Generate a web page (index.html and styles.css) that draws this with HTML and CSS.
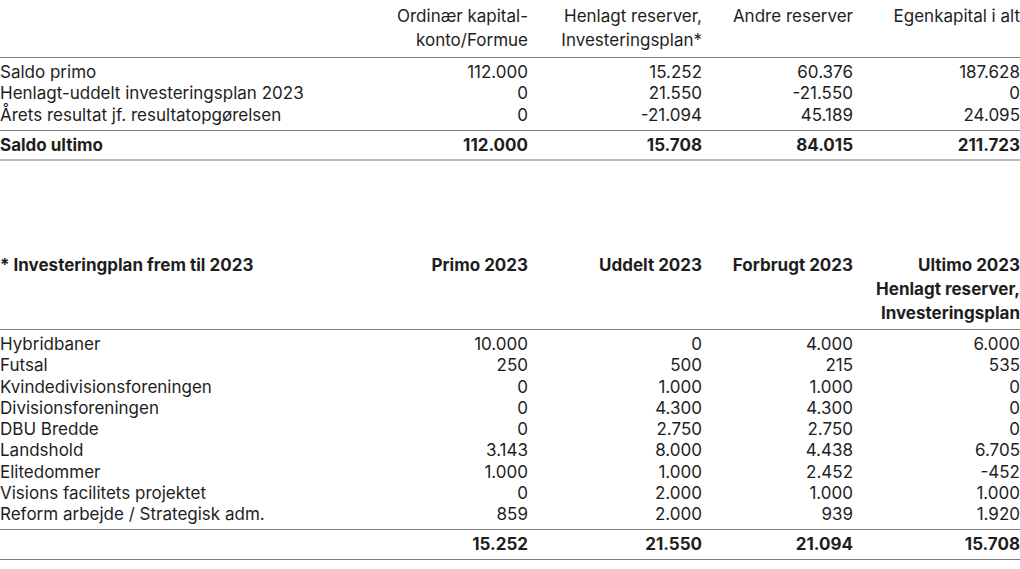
FILE: index.html
```html
<!DOCTYPE html>
<html lang="da">
<head>
<meta charset="utf-8">
<link rel="stylesheet" href="styles.css">
</head>
<body>
<table class="tbl">
  <colgroup><col class="c-label"><col class="c1"><col class="c2"><col class="c3"><col class="c4"></colgroup>
  <thead>
    <tr><th></th><th>Ordinær kapital-<br>konto/Formue</th><th>Henlagt reserver,<br>Investeringsplan*</th><th>Andre reserver</th><th>Egenkapital i alt</th></tr>
  </thead>
  <tbody class="body">
    <tr><td>Saldo primo</td><td>112.000</td><td>15.252</td><td>60.376</td><td>187.628</td></tr>
    <tr><td>Henlagt-uddelt investeringsplan 2023</td><td>0</td><td>21.550</td><td>-21.550</td><td>0</td></tr>
    <tr><td>Årets resultat jf. resultatopgørelsen</td><td>0</td><td>-21.094</td><td>45.189</td><td>24.095</td></tr>
  </tbody>
  <tbody class="total total-light">
    <tr><td>Saldo ultimo</td><td>112.000</td><td>15.708</td><td>84.015</td><td>211.723</td></tr>
  </tbody>
</table>

<table class="tbl tbl-plan">
  <colgroup><col class="c-label"><col class="c1"><col class="c2"><col class="c3"><col class="c4"></colgroup>
  <thead class="bold-head">
    <tr><th>* Investeringplan frem til 2023</th><th>Primo 2023</th><th>Uddelt 2023</th><th>Forbrugt 2023</th><th>Ultimo 2023<br>Henlagt reserver,<br>Investeringsplan</th></tr>
  </thead>
  <tbody class="body">
    <tr><td>Hybridbaner</td><td>10.000</td><td>0</td><td>4.000</td><td>6.000</td></tr>
    <tr><td>Futsal</td><td>250</td><td>500</td><td>215</td><td>535</td></tr>
    <tr><td>Kvindedivisionsforeningen</td><td>0</td><td>1.000</td><td>1.000</td><td>0</td></tr>
    <tr><td>Divisionsforeningen</td><td>0</td><td>4.300</td><td>4.300</td><td>0</td></tr>
    <tr><td>DBU Bredde</td><td>0</td><td>2.750</td><td>2.750</td><td>0</td></tr>
    <tr><td>Landshold</td><td>3.143</td><td>8.000</td><td>4.438</td><td>6.705</td></tr>
    <tr><td>Elitedommer</td><td>1.000</td><td>1.000</td><td>2.452</td><td>-452</td></tr>
    <tr><td>Visions facilitets projektet</td><td>0</td><td>2.000</td><td>1.000</td><td>1.000</td></tr>
    <tr><td>Reform arbejde / Strategisk adm.</td><td>859</td><td>2.000</td><td>939</td><td>1.920</td></tr>
  </tbody>
  <tbody class="total">
    <tr><td></td><td>15.252</td><td>21.550</td><td>21.094</td><td>15.708</td></tr>
  </tbody>
</table>
</body>
</html>
```

FILE: styles.css
```css
html, body {
  margin: 0;
  padding: 0;
  background: #ffffff;
}
body {
  font-family: Inter, "Open Sans", sans-serif;
  font-size: 17px;
  color: #1e1e1e;
}
.tbl {
  width: 1020px;
  border-collapse: collapse;
  table-layout: fixed;
}
.tbl-plan {
  margin-top: 88px;
}
.c-label { width: 380px; }
.c1 { width: 148px; }
.c2 { width: 174px; }
.c3 { width: 151px; }
.c4 { width: 167px; }

.tbl th {
  font-weight: normal;
  text-align: right;
  vertical-align: top;
  line-height: 24px;
  padding: 4px 0 5px;
  border-bottom: 1px solid #7a7a7a;
}
.tbl th:first-child { text-align: left; }
.bold-head th {
  font-weight: 700;
  padding-bottom: 4px;
}
.tbl td {
  padding: 0;
  line-height: 21.25px;
  text-align: right;
  white-space: nowrap;
}
.tbl td:first-child { text-align: left; }
.body tr:first-child td { padding-top: 4px; }
.body tr:last-child td { padding-bottom: 4px; }
.total td {
  font-weight: 700;
  padding-top: 4px;
  padding-bottom: 3px;
  border-top: 1px solid #7a7a7a;
  border-bottom: 1px solid #7a7a7a;
}
.total-light td {
  border-bottom: 2px solid #bdbdbd;
}
```
